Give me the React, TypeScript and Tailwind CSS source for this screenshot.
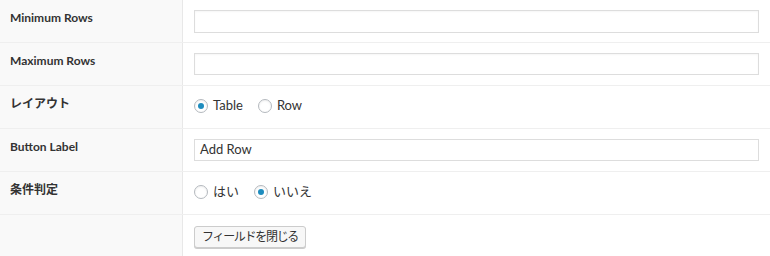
import React from "react";

const font = { fontFamily: 'Lato, "Noto Sans CJK JP", sans-serif' };

function Radio({ checked, label }: { checked: boolean; label: string }) {
  return (
    <label className="flex items-center gap-[5px] mr-[15px]">
      <span className="w-[14px] h-[14px] rounded-full border border-[#b4b9be] bg-white flex items-center justify-center shadow-[inset_0_1px_2px_rgba(0,0,0,0.07)]">
        {checked && <span className="w-[6px] h-[6px] rounded-full bg-[#1e8cbe]" />}
      </span>
      <span className="text-[13px] text-[#333]">{label}</span>
    </label>
  );
}

function Row({ label, children, last }: { label: string; children: React.ReactNode; last?: boolean }) {
  return (
    <div className={`flex h-[43px] ${last ? "" : "border-b border-[#efefef]"}`}>
      <div className="w-[183px] shrink-0 bg-[#f9f9f9] border-r border-[#e8e8e8] pl-[10px] pt-[9px] text-[12px] font-bold text-[#333]">
        {label}
      </div>
      <div className="flex-1 pl-[11px] pr-[11px] pt-[10px]">{children}</div>
    </div>
  );
}

export default function App() {
  return (
    <div className="w-[770px] h-[256px] bg-white overflow-hidden" style={font}>
      <Row label="Minimum Rows">
        <div className="h-[23px] border border-[#dddddd] bg-white shadow-[inset_0_1px_2px_rgba(0,0,0,0.04)]" />
      </Row>
      <Row label="Maximum Rows">
        <div className="h-[22px] border border-[#dddddd] bg-white shadow-[inset_0_1px_2px_rgba(0,0,0,0.04)]" />
      </Row>
      <Row label="レイアウト">
        <div className="flex items-center h-[19px]">
          <Radio checked label="Table" />
          <Radio checked={false} label="Row" />
        </div>
      </Row>
      <Row label="Button Label">
        <div className="h-[22px] border border-[#dddddd] bg-white flex items-center pl-[5px] text-[13px] text-[#333]">
          Add Row
        </div>
      </Row>
      <Row label="条件判定">
        <div className="flex items-center h-[19px]">
          <Radio checked={false} label="はい" />
          <Radio checked label="いいえ" />
        </div>
      </Row>
      <Row label="" last>
        <div className="pt-[1px]">
          <button className="h-[22px] w-[112px] border border-[#cccccc] rounded-[3px] bg-[#f7f7f7] text-[12px] tracking-[-1.3px] text-[#333] shadow-[0_1px_0_#ccc] flex items-center justify-center">
            フィールドを閉じる
          </button>
        </div>
      </Row>
    </div>
  );
}
